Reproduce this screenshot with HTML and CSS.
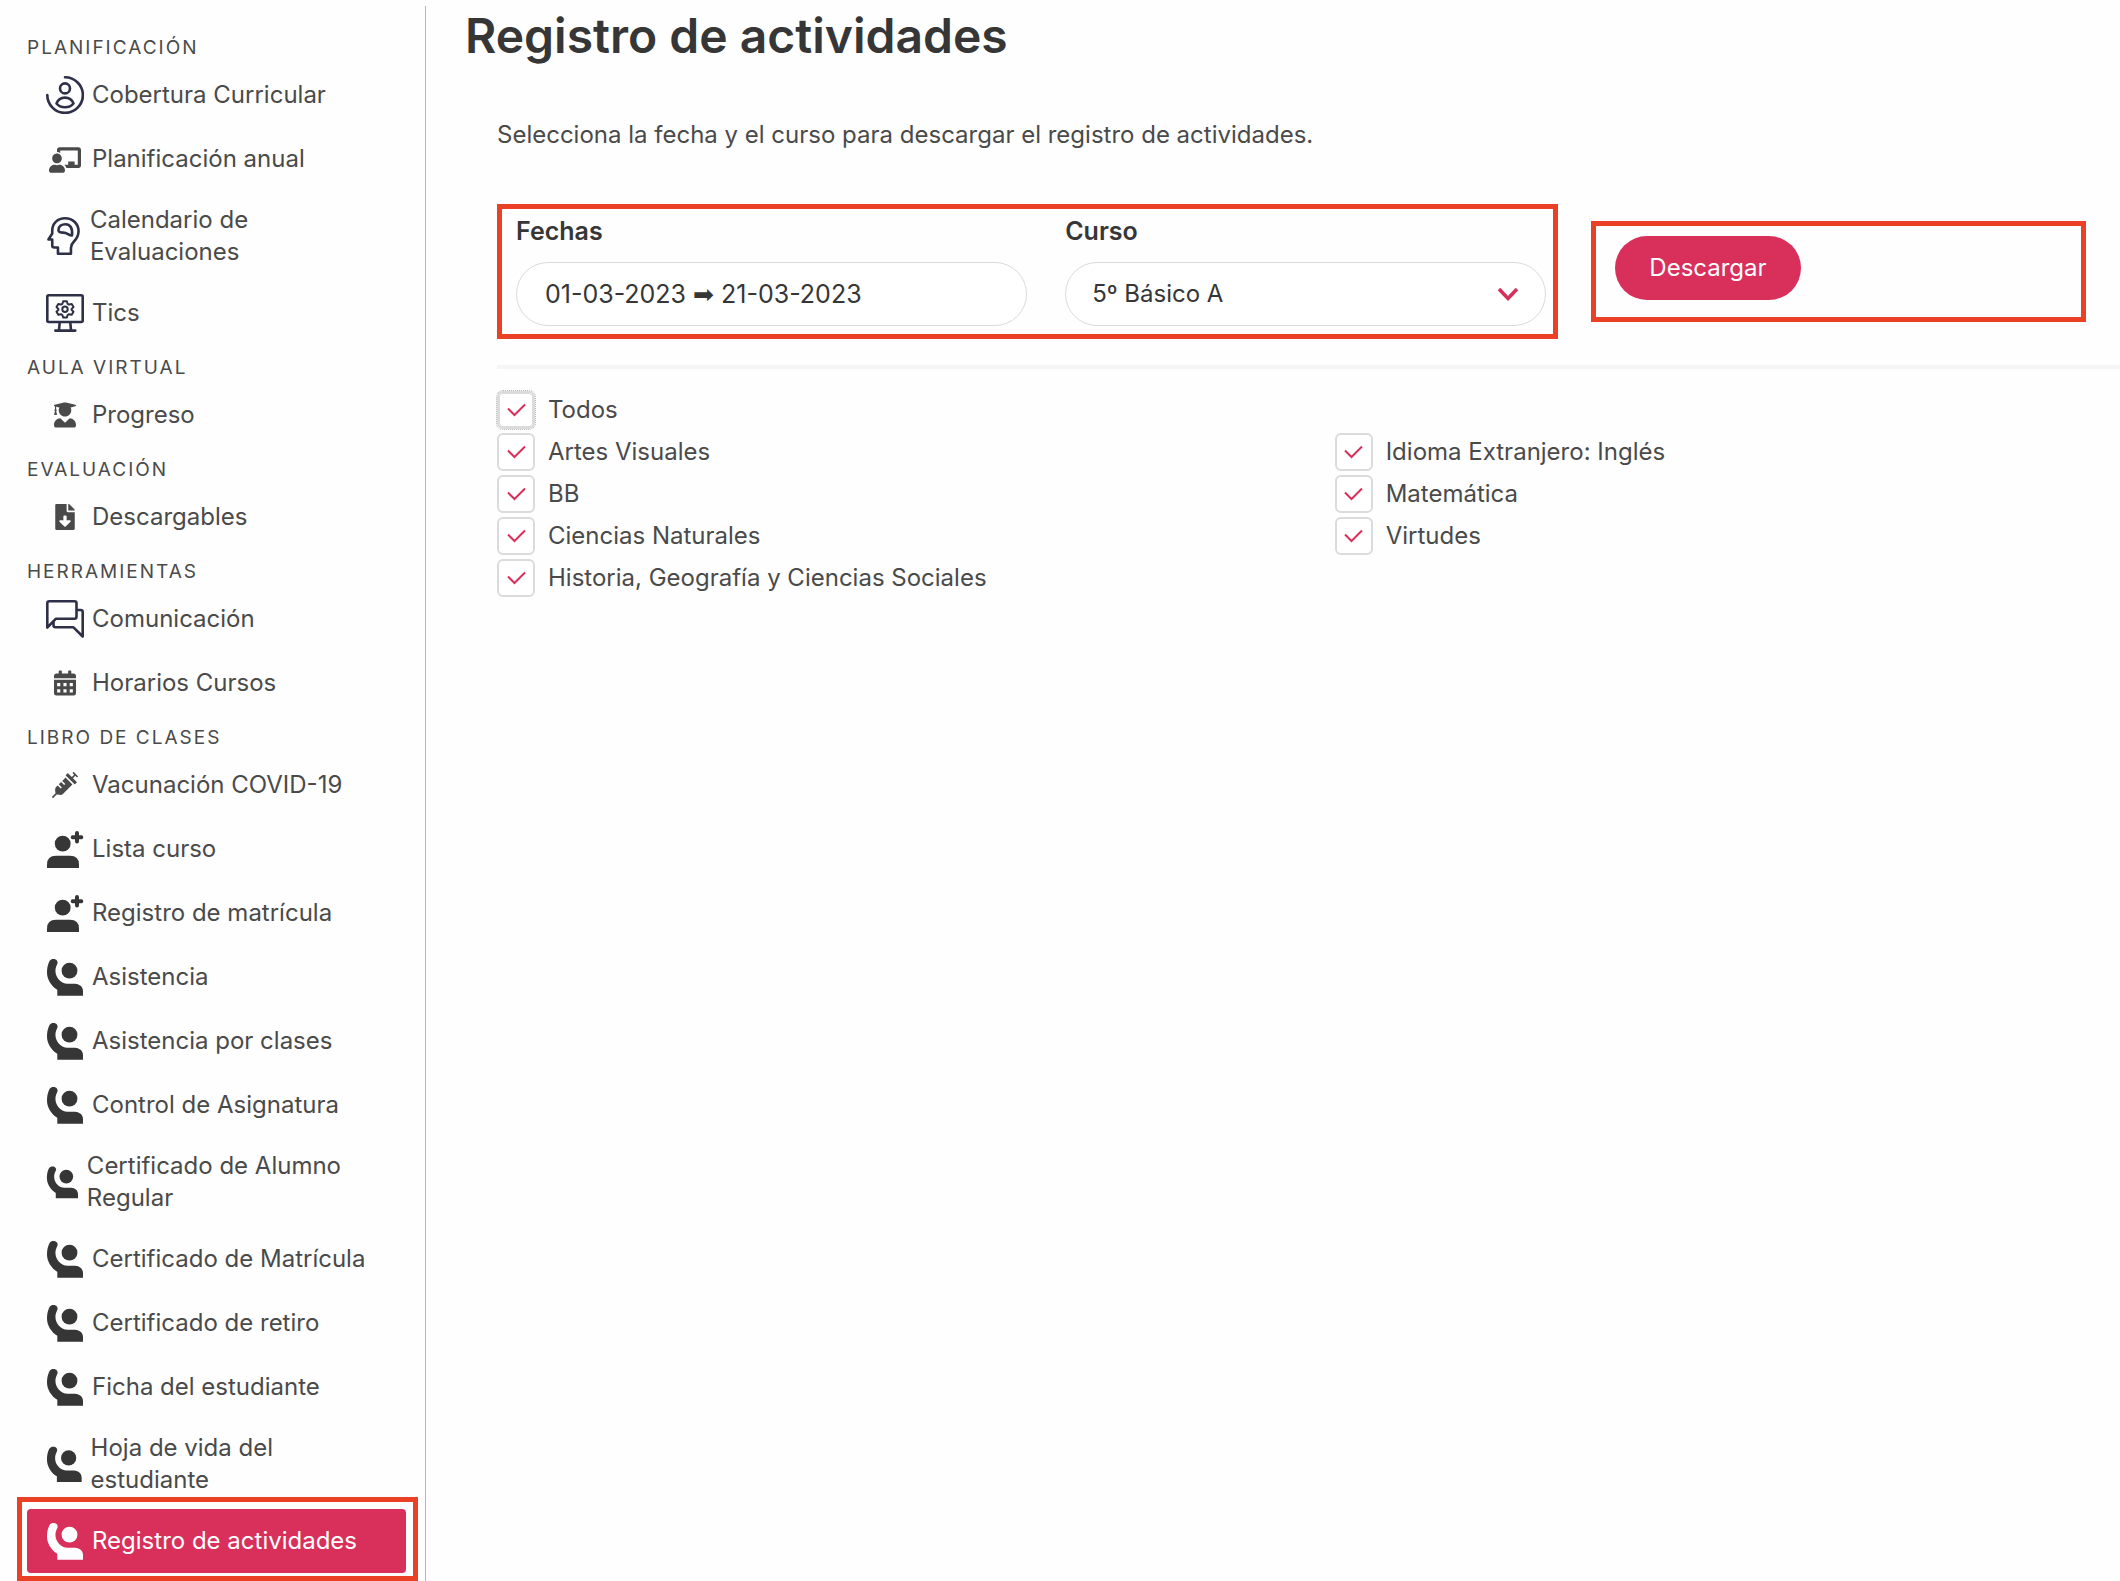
FILE: index.html
```html
<!DOCTYPE html>
<html lang="es">
<head>
<meta charset="utf-8">
<meta name="viewport" content="width=device-width, initial-scale=1">
<title>Registro de actividades</title>
<link rel="stylesheet" href="styles.css">
</head>
<body>
<svg class="sprite" aria-hidden="true">
  <symbol id="i-coverage" viewBox="0 0 38 38">
    <g fill="none" stroke="#2e3047" stroke-width="2.6" stroke-linecap="round" stroke-linejoin="round">
      <path d="M19 1.3A17.8 17.8 0 1 1 1.3 19"/>
      <circle cx="19" cy="12.4" r="5"/>
      <path d="M10.5 27.5C12 23.5 15 21.6 19 21.6s7 1.900 8.500 5.900C25.500 30 22.500 31.200 19 31.200s-6.500-1.200-8.500-3.700z"/>
    </g>
  </symbol>
  <symbol id="i-teacher" viewBox="0 0 38 38">
    <svg x="3" y="7" width="32" height="26" viewBox="0 0 640 512"><path fill="#4a4a4a" d="M208 352c-2.390 0-4.780.35-7.060 1.090C187.980 357.300 174.350 360 160 360c-14.350 0-27.980-2.700-40.950-6.910-2.280-.74-4.660-1.090-7.050-1.090C49.940 352-.33 402.480 0 464.620.14 490.880 21.730 512 48 512h224c26.270 0 47.860-21.120 48-47.380.33-62.140-49.940-112.620-112-112.620zm-48-32c53.020 0 96-42.980 96-96s-42.980-96-96-96-96 42.980-96 96 42.980 96 96 96zM592 0H208c-26.470 0-48 22.250-48 49.590V96c23.420 0 45.100 6.780 64 17.800V64h352v288h-64v-64H384v64h-76.240c19.100 16.690 33.120 38.730 39.690 64H592c26.470 0 48-22.250 48-49.590V49.590C640 22.250 618.470 0 592 0z"/></svg>
  </symbol>
  <symbol id="i-mind" viewBox="0 0 34 38">
    <g fill="none" stroke="#2e3047" stroke-width="2.6" stroke-linejoin="round">
      <path d="M11 36.700V30.500H7.500Q5.300 30.500 5.300 28.500V22.500H1.500L5.300 16.500V13.500C5.300 6 11 1.300 18 1.300C26 1.300 31.600 7 31.600 14C31.600 19 29.500 22 27 24.500Q24 27.500 24 31V36.700Z"/>
      <path d="M11.500 13.200C11.500 9 15 7.200 18.500 7.200C23 7.200 26 11 25 18.500C21.500 18.500 20.500 15.600 16.500 15.600C14 15.600 11.500 15.600 11.500 13.200Z"/>
    </g>
  </symbol>
  <symbol id="i-tics" viewBox="0 0 38 38">
    <g fill="none" stroke="#2e3047" stroke-width="2.6" stroke-linecap="round" stroke-linejoin="round">
      <rect x="1.300" y="1.300" width="35.400" height="26.700" rx="1.500"/>
      <path d="M13.700 28.500L13 36.200M24.300 28.500L25 36.200M9.300 36.600H29.300"/>
      <g stroke-width="2">
        <circle cx="19" cy="15.200" r="2.700"/>
        <path d="M17.200 7.200h3.600l.8 2.600 1.400.8 2.700-.6 1.800 3.100-1.900 1.900v.8l1.900 1.900-1.800 3.100-2.700-.6-1.400.8-.8 2.600h-3.600l-.8-2.600-1.400-.8-2.700.6-1.800-3.100 1.900-1.900v-.8l-1.900-1.900 1.800-3.100 2.700.6 1.400-.8z"/>
      </g>
    </g>
  </symbol>
  <symbol id="i-graduate" viewBox="0 0 38 38">
    <svg x="8" y="6" width="22" height="26" viewBox="0 0 448 512"><path fill="#4a4a4a" d="M319.400 320.600L224 416l-95.400-95.400C57.100 323.700 0 382.200 0 454.400v9.600c0 26.500 21.500 48 48 48h352c26.500 0 48-21.500 48-48v-9.600c0-72.200-57.100-130.700-128.600-133.800zM13.600 79.800l6.400 1.500v58.400c-7 4.200-12 11.500-12 20.300 0 8.400 4.600 15.400 11.100 19.700L3.500 242c-1.700 6.900 2.100 14 7.600 14h41.800c5.500 0 9.300-7.100 7.600-14l-15.600-62.300C51.400 175.400 56 168.400 56 160c0-8.800-5-16.100-12-20.300V87.100l66 15.900c-8.600 17.200-14 36.400-14 57 0 70.700 57.300 128 128 128s128-57.300 128-128c0-20.600-5.300-39.800-14-57l96.300-23.200c18.200-4.400 18.200-27.100 0-31.500l-190.400-46c-13-3.100-26.700-3.100-39.700 0L13.600 48.200c-18.100 4.400-18.100 27.200 0 31.600z"/></svg>
  </symbol>
  <symbol id="i-download" viewBox="0 0 38 38">
    <svg x="9" y="6" width="20" height="26" viewBox="0 0 384 512"><path fill="#4a4a4a" d="M224 136V0H24C10.700 0 0 10.700 0 24v464c0 13.300 10.700 24 24 24h336c13.300 0 24-10.700 24-24V160H248c-13.200 0-24-10.800-24-24zm76.450 211.360l-96.420 95.700c-6.650 6.610-17.390 6.610-24.040 0l-96.420-95.700C73.420 337.290 80.540 320 94.820 320H160v-80c0-8.840 7.160-16 16-16h32c8.840 0 16 7.160 16 16v80h65.180c14.280 0 21.400 17.290 11.270 27.360zM377 105L279.100 7c-4.500-4.500-10.600-7-17-7H256v128h128v-6.100c0-6.300-2.500-12.400-7-16.900z"/></svg>
  </symbol>
  <symbol id="i-chat" viewBox="0 0 38 38">
    <g fill="none" stroke="#2e3047" stroke-width="2.6" stroke-linejoin="round">
      <path d="M1.300 27.500V3.300Q1.300 1.300 3.300 1.300H28.500Q30.500 1.300 30.500 3.300V16.500Q30.500 18.700 28.500 18.700H10Z"/>
      <path d="M30.500 10H34.500Q36.700 10 36.700 12V36.500L27.500 27.300H9.500Q7.500 27.300 7.500 25.300V21.500"/>
    </g>
  </symbol>
  <symbol id="i-calendar" viewBox="0 0 38 38">
    <svg x="8" y="6" width="22" height="26" viewBox="0 0 448 512"><path fill="#4a4a4a" fill-rule="evenodd" d="M0 192h448v272a48 48 0 0 1-48 48H48a48 48 0 0 1-48-48zM64 256v64h64v-64zM192 256v64h64v-64zM320 256v64h64v-64zM64 384v64h64v-64zM192 384v64h64v-64zM320 384v64h64v-64zM400 64h-48V16c0-8.800-7.200-16-16-16h-32c-8.800 0-16 7.200-16 16v48H160V16c0-8.800-7.200-16-16-16h-32c-8.800 0-16 7.200-16 16v48H48C21.500 64 0 85.500 0 112v48h448v-48c0-26.500-21.500-48-48-48z"/></svg>
  </symbol>
  <symbol id="i-syringe" viewBox="0 0 38 38">
    <svg x="6" y="6" width="26" height="26" viewBox="0 0 512 512"><path fill="#4a4a4a" d="M201.500 174.800l55.700 55.800c3.100 3.100 3.100 8.200 0 11.300l-11.300 11.300c-3.100 3.100-8.200 3.100-11.300 0l-55.700-55.800-45.300 45.300 55.800 55.800c3.100 3.100 3.100 8.200 0 11.300l-11.300 11.300c-3.100 3.100-8.200 3.100-11.300 0L111 265.200l-26.400 26.400c-17.300 17.300-25.600 41.100-23 65.400l7.100 63.600L2.300 487c-3.100 3.100-3.100 8.200 0 11.300l11.300 11.300c3.100 3.100 8.200 3.100 11.300 0l66.300-66.300 63.600 7.100c23.900 2.600 47.900-5.400 65.400-23l181.900-181.900-135.700-135.700-64.900 65zm308.200-93.300L430.500 2.300c-3.100-3.100-8.200-3.100-11.300 0l-11.300 11.300c-3.100 3.100-3.100 8.200 0 11.300l28.300 28.300-45.300 45.300-56.600-56.600-17-17c-3.100-3.100-8.200-3.100-11.300 0l-33.900 33.900c-3.100 3.100-3.100 8.200 0 11.300l17 17L424.800 223l17 17c3.100 3.100 8.200 3.100 11.300 0l33.900-34c3.100-3.100 3.100-8.200 0-11.300l-73.500-73.500 45.300-45.300 28.300 28.300c3.100 3.100 8.200 3.100 11.300 0l11.300-11.300c3.100-3.200 3.100-8.200 0-11.400z"/></svg>
  </symbol>
  <symbol id="i-user-plus" viewBox="0 0 38 38">
    <circle cx="16.700" cy="13.700" r="7.900"/>
    <path d="M1 38V34.500Q1 25.700 10 25.700H24Q33 25.700 33 34.500V38Z"/>
    <path d="M31 3V11.600M26.700 7.300H35.300" fill="none" stroke="currentColor" stroke-width="4" stroke-linecap="round"/>
  </symbol>
  <symbol id="i-hand" viewBox="0 0 38 38">
    <circle cx="23.500" cy="12.700" r="7.900"/>
    <path d="M7.500 1C10.500 1 12.300 3.200 11.400 5.800C9.800 9 9.300 11 9.500 14C10 20 15 25.500 21.500 25.700H29C34 26 37 29 37 33V37.700H11.300V31.800C5 28 1 21 1 14.500C1 10 1.800 6.500 3.300 3.400C4.300 1.600 6 1 7.500 1Z"/>
  </symbol>
</svg>

<div class="layout">
  <nav class="sidebar" aria-label="Menú principal">
    <h2 class="menu-label">Planificación</h2>
    <a class="menu-item" href="#"><svg class="icon"><use href="#i-coverage"/></svg><span>Cobertura Curricular</span></a>
    <a class="menu-item" href="#"><svg class="icon"><use href="#i-teacher"/></svg><span>Planificación anual</span></a>
    <a class="menu-item" href="#"><svg class="icon"><use href="#i-mind"/></svg><span>Calendario de Evaluaciones</span></a>
    <a class="menu-item" href="#"><svg class="icon"><use href="#i-tics"/></svg><span>Tics</span></a>
    <h2 class="menu-label">Aula virtual</h2>
    <a class="menu-item" href="#"><svg class="icon"><use href="#i-graduate"/></svg><span>Progreso</span></a>
    <h2 class="menu-label">Evaluación</h2>
    <a class="menu-item" href="#"><svg class="icon"><use href="#i-download"/></svg><span>Descargables</span></a>
    <h2 class="menu-label">Herramientas</h2>
    <a class="menu-item" href="#"><svg class="icon"><use href="#i-chat"/></svg><span>Comunicación</span></a>
    <a class="menu-item" href="#"><svg class="icon"><use href="#i-calendar"/></svg><span>Horarios Cursos</span></a>
    <h2 class="menu-label">Libro de clases</h2>
    <a class="menu-item" href="#"><svg class="icon"><use href="#i-syringe"/></svg><span>Vacunación COVID-19</span></a>
    <a class="menu-item" href="#"><svg class="icon"><use href="#i-user-plus"/></svg><span>Lista curso</span></a>
    <a class="menu-item" href="#"><svg class="icon"><use href="#i-user-plus"/></svg><span>Registro de matrícula</span></a>
    <a class="menu-item" href="#"><svg class="icon"><use href="#i-hand"/></svg><span>Asistencia</span></a>
    <a class="menu-item" href="#"><svg class="icon"><use href="#i-hand"/></svg><span>Asistencia por clases</span></a>
    <a class="menu-item" href="#"><svg class="icon"><use href="#i-hand"/></svg><span>Control de Asignatura</span></a>
    <a class="menu-item" href="#"><svg class="icon"><use href="#i-hand"/></svg><span>Certificado de Alumno Regular</span></a>
    <a class="menu-item" href="#"><svg class="icon"><use href="#i-hand"/></svg><span>Certificado de Matrícula</span></a>
    <a class="menu-item" href="#"><svg class="icon"><use href="#i-hand"/></svg><span>Certificado de retiro</span></a>
    <a class="menu-item" href="#"><svg class="icon"><use href="#i-hand"/></svg><span>Ficha del estudiante</span></a>
    <a class="menu-item" href="#"><svg class="icon"><use href="#i-hand"/></svg><span>Hoja de vida del estudiante</span></a>
    <a class="menu-item is-active" href="#" aria-current="page"><svg class="icon"><use href="#i-hand"/></svg><span>Registro de actividades</span></a>
  </nav>

  <main class="main">
    <h1 class="title">Registro de actividades</h1>
    <div class="content">
      <p class="intro">Selecciona la fecha y el curso para descargar el registro de actividades.</p>
      <form class="filters">
        <div class="frame fields">
          <div class="field">
            <label for="fechas">Fechas</label>
            <input class="control" id="fechas" type="text" value="01-03-2023 ➡ 21-03-2023">
          </div>
          <div class="field">
            <label for="curso">Curso</label>
            <select class="control select" id="curso"><option>5º Básico A</option></select>
          </div>
        </div>
        <div class="frame actions">
          <button class="button" type="button">Descargar</button>
        </div>
      </form>
      <hr class="divider">
      <div class="subjects">
        <div class="column">
          <label class="check"><input class="is-focused" type="checkbox" checked>Todos</label>
          <label class="check"><input type="checkbox" checked>Artes Visuales</label>
          <label class="check"><input type="checkbox" checked>BB</label>
          <label class="check"><input type="checkbox" checked>Ciencias Naturales</label>
          <label class="check"><input type="checkbox" checked>Historia, Geografía y Ciencias Sociales</label>
        </div>
        <div class="column">
          <label class="check"><input type="checkbox" checked>Idioma Extranjero: Inglés</label>
          <label class="check"><input type="checkbox" checked>Matemática</label>
          <label class="check"><input type="checkbox" checked>Virtudes</label>
        </div>
      </div>
    </div>
  </main>
</div>
</body>
</html>
```

FILE: styles.css
```css
* {
  box-sizing: border-box;
}

body {
  margin: 0;
  background: #fefefe;
  color: #4a4a4a;
  font: 400 24px/32px Inter, "Liberation Sans", sans-serif;
}

.sprite {
  position: absolute;
  width: 0;
  height: 0;
}

.layout {
  display: flex;
  align-items: stretch;
}

/* Sidebar */
.sidebar {
  flex: 0 0 426px;
  margin-top: 6px;
  padding: 19px 19px 8px 27px;
  border-right: 1px solid #b5b5b5;
}

.menu-label {
  margin: 0;
  padding-top: 8px;
  font-size: 19px;
  font-weight: 400;
  line-height: 30px;
  letter-spacing: 2px;
  text-transform: uppercase;
}

.menu-item {
  display: flex;
  align-items: center;
  padding: 13px 19px;
  color: #4a4a4a;
  text-decoration: none;
}

.menu-item span {
  margin-left: 8px;
}

.icon {
  flex: 0 1 38px;
  width: 38px;
  height: 38px;
  min-width: 0;
  color: #363636;
  fill: currentColor;
}

.menu-item.is-active {
  position: relative;
  border-radius: 4px;
  background: #d92f5b;
  color: #fff;
}

.menu-item.is-active .icon {
  color: #fff;
}

.menu-item.is-active::after {
  content: "";
  position: absolute;
  inset: -12px -12px -8px -10px;
  border: 5px solid #ea4025;
}

/* Main column */
.main {
  flex: 1;
  min-width: 0;
  padding-left: 39px;
}

.title {
  margin: 0;
  color: #363636;
  font-size: 48px;
  font-weight: 600;
  line-height: 72px;
}

.content {
  padding-left: 32px;
}

.intro {
  margin: 47px 0 53px;
}

.filters {
  display: grid;
  grid-template-columns: 1062fr 495fr;
  gap: 33px;
  align-items: center;
  padding-right: 34px;
}

.frame {
  border: 5px solid #ea4025;
}

.fields {
  display: grid;
  grid-template-columns: 511fr 481fr;
  gap: 38px;
  padding: 6px 7px 8px 14px;
}

.field label {
  display: block;
  margin-bottom: 15px;
  color: #363636;
  font-size: 25px;
  font-weight: 600;
}

.control {
  display: block;
  width: 100%;
  height: 64px;
  padding: 0 28px;
  border: 1px solid #dbdbdb;
  border-radius: 32px;
  background: #fff;
  color: #363636;
  font: inherit;
  font-size: 25px;
}

.select {
  appearance: none;
  padding: 0 26px;
  background: #fff url("data:image/svg+xml,%3Csvg xmlns='http://www.w3.org/2000/svg' width='22' height='14' viewBox='0 0 22 14'%3E%3Cpath d='M2 2L11 11.500L20 2' fill='none' stroke='%23d92f5b' stroke-width='3.500'/%3E%3C/svg%3E") no-repeat right 26px center;
  font-size: 24px;
}

.actions {
  padding: 10px 19px 17px;
}

.button {
  display: block;
  height: 64px;
  padding: 0 34px;
  border: 0;
  border-radius: 32px;
  background: #d92f5b;
  color: #fff;
  font: inherit;
}

.divider {
  height: 4px;
  margin: 26px 0 22px;
  border: 0;
  background: #f5f5f5;
}

.subjects {
  display: grid;
  grid-template-columns: 16fr 15fr;
}

.column {
  display: grid;
  align-content: start;
  gap: 4px;
}

.column:last-child {
  margin-top: 42px;
}

.check {
  display: flex;
  align-items: center;
  gap: 13px;
}

.check input {
  appearance: none;
  width: 38px;
  height: 38px;
  margin: 0;
  border: 2px solid #dbdbdb;
  border-radius: 6px;
  background: #fff url("data:image/svg+xml,%3Csvg xmlns='http://www.w3.org/2000/svg' width='19' height='14' viewBox='0 0 19 14'%3E%3Cpath d='M1 5.500L7.500 12L18 1.500' fill='none' stroke='%23d92f5b' stroke-width='2'/%3E%3C/svg%3E") no-repeat center;
}

.check .is-focused {
  outline: 1px dotted #b5b5b5;
  box-shadow: inset 0 0 0 1px #dbdbdb;
}
```
